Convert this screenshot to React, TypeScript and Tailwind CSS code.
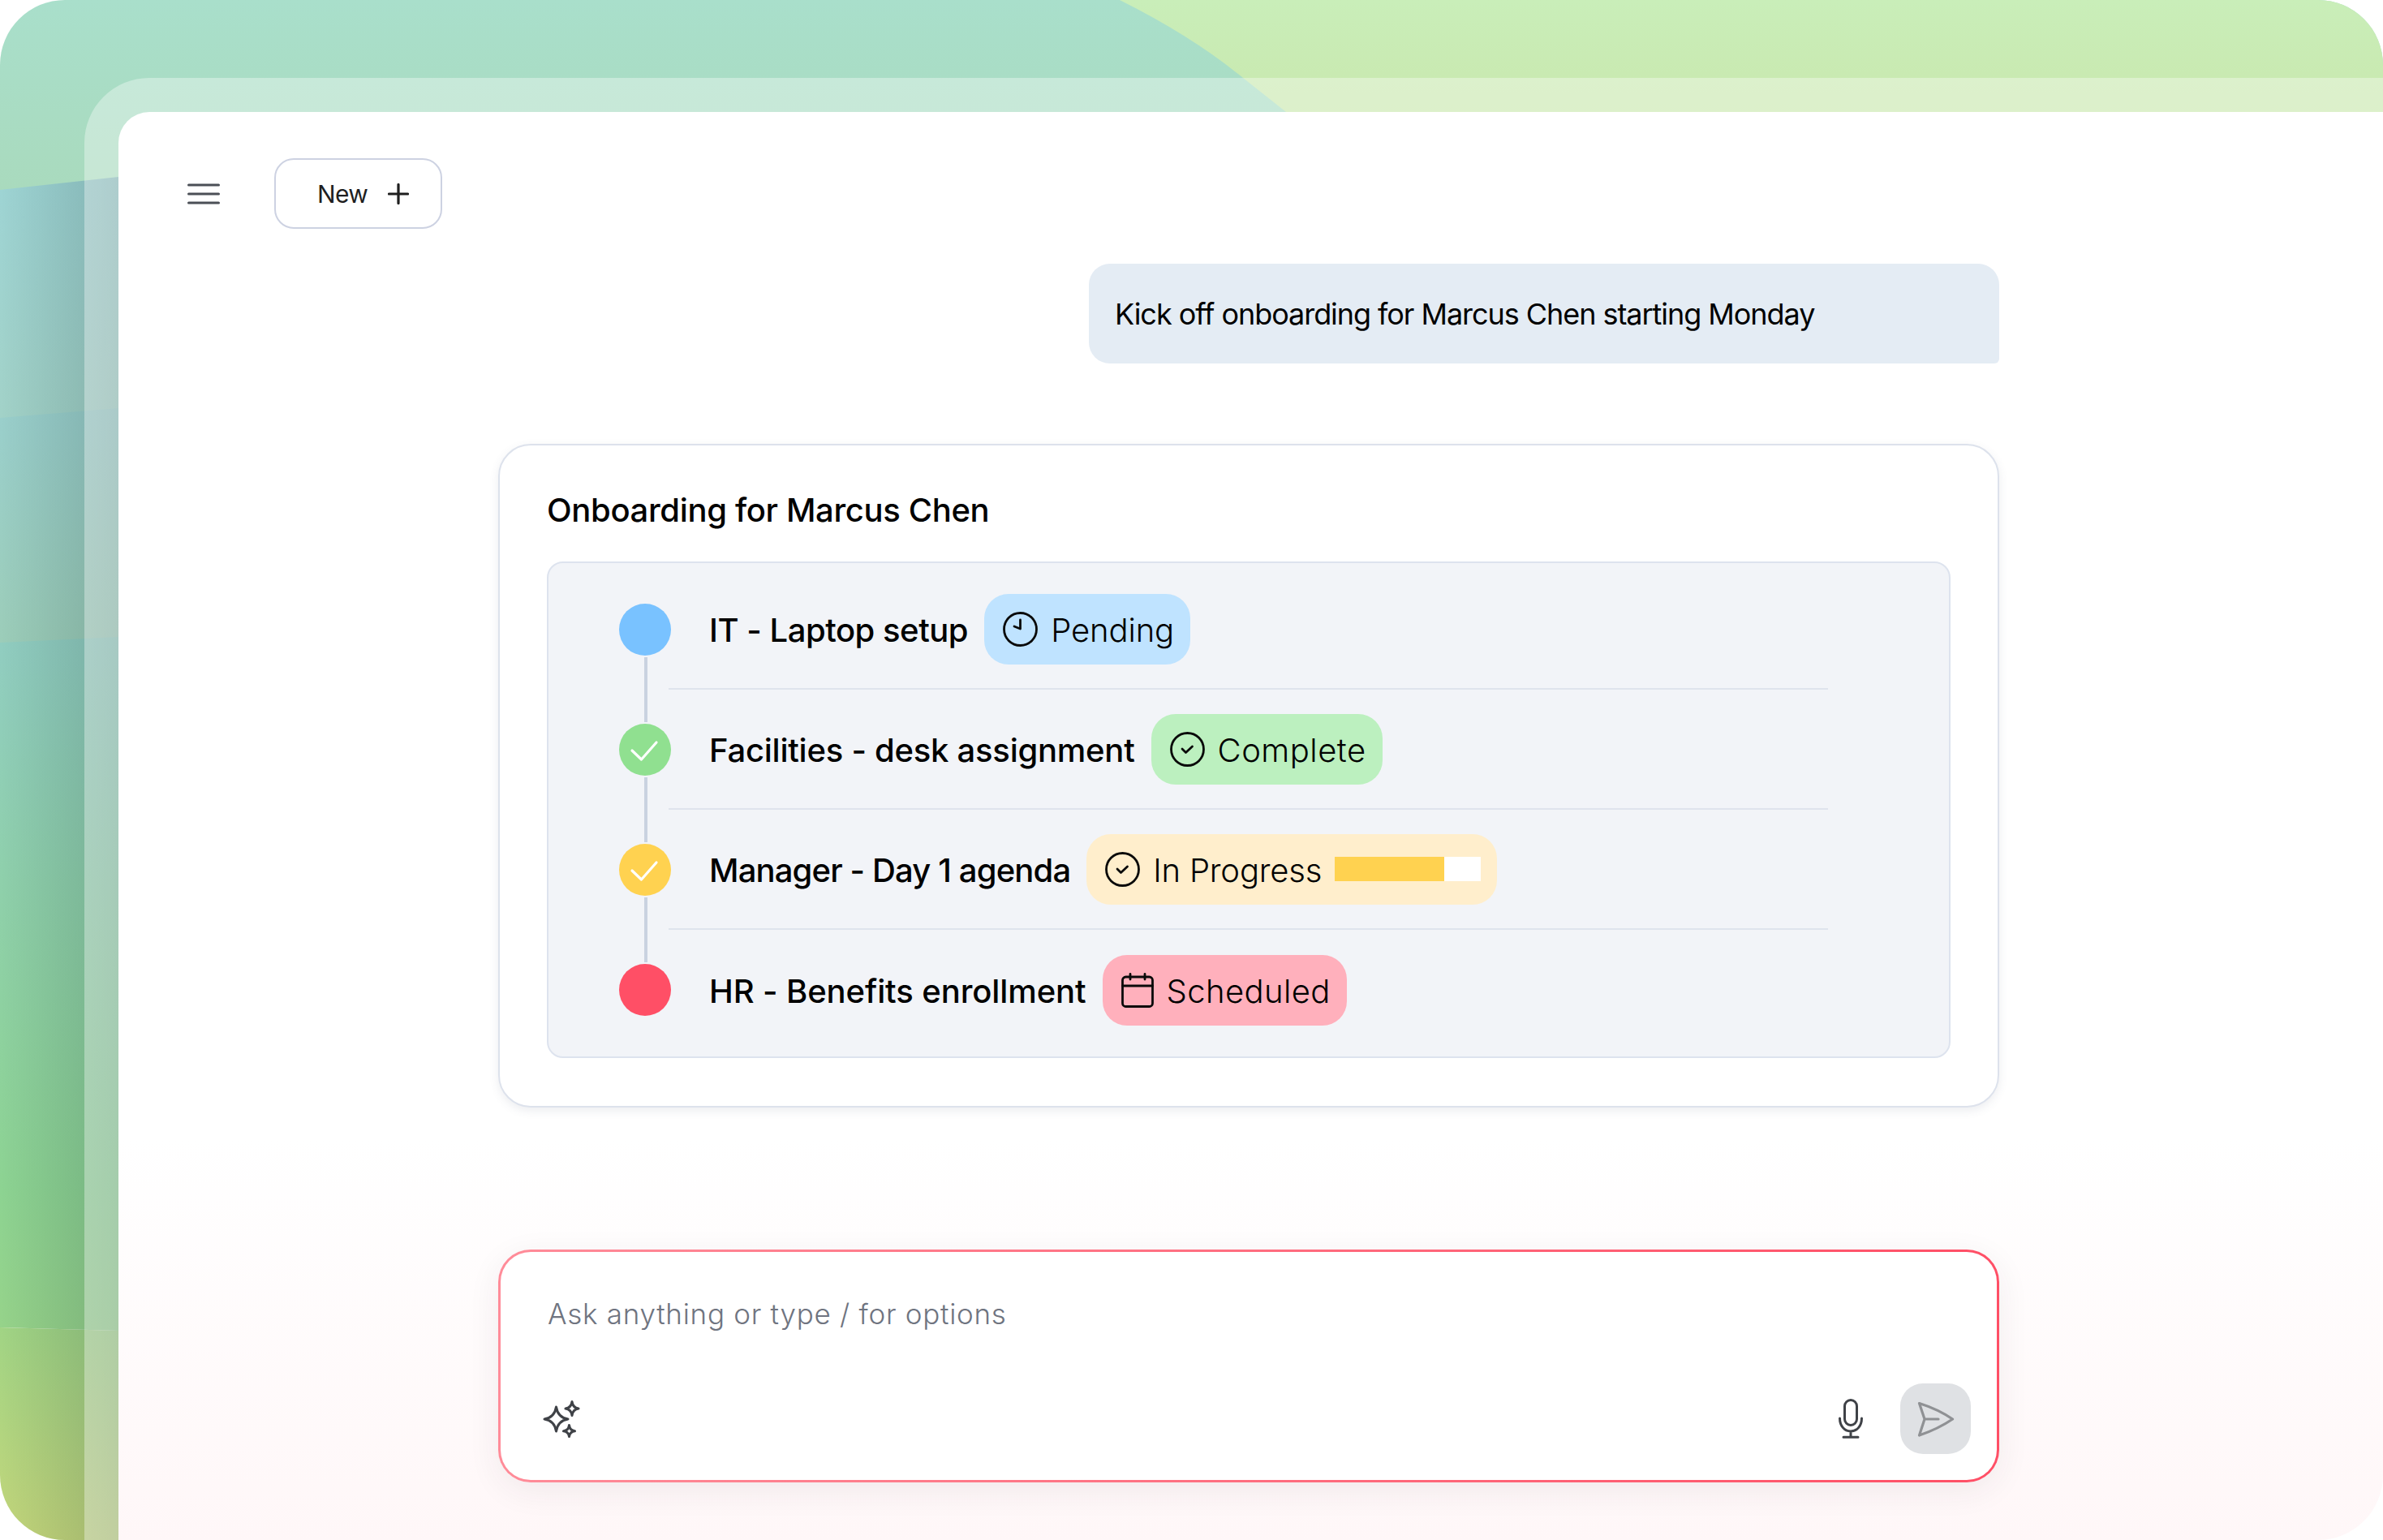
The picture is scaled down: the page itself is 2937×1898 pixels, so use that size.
import type { ReactNode } from 'react';

const font = { fontFamily: 'Inter, "Liberation Sans", sans-serif' };

// painted backdrop behind the app frame
const Backdrop = () => (
  <svg className="absolute inset-0" width="2937" height="1898" viewBox="0 0 2937 1898" fill="none">
    <defs>
      <linearGradient id="mint" x1="0" y1="0" x2="0" y2="240" gradientUnits="userSpaceOnUse">
        <stop stopColor="#a9dfcb" />
        <stop offset="1" stopColor="#a9dabd" />
      </linearGradient>
      <linearGradient id="lime" x1="0" y1="0" x2="0" y2="140" gradientUnits="userSpaceOnUse">
        <stop stopColor="#c9eeb9" />
        <stop offset="1" stopColor="#c9e8ae" />
      </linearGradient>
      <linearGradient id="b1" x1="0" y1="225" x2="0" y2="515" gradientUnits="userSpaceOnUse">
        <stop stopColor="#9ed4d4" />
        <stop offset="1" stopColor="#a2d2c8" />
      </linearGradient>
      <linearGradient id="b2" x1="0" y1="505" x2="0" y2="792" gradientUnits="userSpaceOnUse">
        <stop stopColor="#9acfcc" />
        <stop offset="1" stopColor="#9ccdb9" />
      </linearGradient>
      <linearGradient id="b3" x1="0" y1="785" x2="0" y2="1636" gradientUnits="userSpaceOnUse">
        <stop stopColor="#91cdc1" />
        <stop offset="0.36" stopColor="#8fd0ab" />
        <stop offset="0.8" stopColor="#8dd392" />
        <stop offset="1" stopColor="#96d38a" />
      </linearGradient>
      <linearGradient id="b4" x1="0" y1="1630" x2="0" y2="1898" gradientUnits="userSpaceOnUse">
        <stop stopColor="#a0d485" />
        <stop offset="1" stopColor="#c4d67a" />
      </linearGradient>
      <linearGradient id="shade" x1="0" y1="0" x2="146" y2="0" gradientUnits="userSpaceOnUse">
        <stop stopColor="#1e3c3c" stopOpacity="0" />
        <stop offset="1" stopColor="#1e3c3c" stopOpacity="0.22" />
      </linearGradient>
    </defs>
    <rect width="2937" height="240" fill="url(#mint)" />
    <path d="M1380 0Q1470 45 1532 96L1585 138V240H2937V0Z" fill="url(#lime)" />
    <path d="M0 234L146 218V520L0 516Z" fill="url(#b1)" />
    <path d="M0 515L146 503V792L0 792Z" fill="url(#b2)" />
    <path d="M0 792L146 785V1640L0 1636Z" fill="url(#b3)" />
    <path d="M0 1636L146 1640V1898H0Z" fill="url(#b4)" />
    <path d="M0 234L146 218V1898H0Z" fill="url(#shade)" />
  </svg>
);

const Clock = () => (
  <svg width="43" height="43" viewBox="0 0 43 43" fill="none" stroke="#0a0a0a" strokeWidth="2.8" strokeLinecap="round" strokeLinejoin="round">
    <circle cx="21.5" cy="21.5" r="20" />
    <path d="M21.5 10V21L14 18" />
  </svg>
);

const CircleCheck = () => (
  <svg width="43" height="43" viewBox="0 0 43 43" fill="none" stroke="#0a0a0a" strokeWidth="2.8" strokeLinecap="round" strokeLinejoin="round">
    <circle cx="21.5" cy="21.5" r="20" />
    <path d="M15 21L19.5 25.5L27.5 18" />
  </svg>
);

const CalendarIcon = () => (
  <svg width="40" height="43" viewBox="0 0 40 43" fill="none" stroke="#0a0a0a" strokeWidth="2.8" strokeLinecap="round" strokeLinejoin="round">
    <rect x="1.5" y="5" width="37" height="36.5" rx="4" />
    <path d="M1.5 16H38.5M11 1.5V8M29 1.5V8" />
  </svg>
);

const Sparkles = () => (
  <svg width="46" height="46" viewBox="0 0 46 46" fill="none" stroke="#3f4247" strokeWidth="3" strokeLinejoin="round">
    <path d="M16.5 8Q18.5 21 31 23Q18.5 25 16.5 38Q14.5 25 2 23Q14.5 21 16.5 8Z" />
    <path d="M36 1.5Q37 9 44 10Q37 11 36 18.5Q35 11 28 10Q35 9 36 1.5Z" />
    <path d="M32.5 30.5Q33.3 37 39.5 37.8Q33.3 38.6 32.5 44.5Q31.7 38.6 25.5 37.8Q31.7 37 32.5 30.5Z" />
  </svg>
);

const MicIcon = () => (
  <svg width="30" height="49" viewBox="0 0 30 49" fill="none" stroke="#3f4247" strokeWidth="3" strokeLinecap="round" strokeLinejoin="round">
    <rect x="7.5" y="1.5" width="15" height="31" rx="7.5" />
    <path d="M1.5 24C1.5 33 7 40 15 40S28.5 33 28.5 24M15 40V47M6 47.2H24" />
  </svg>
);

const SendIcon = () => (
  <svg width="46" height="44" viewBox="0 0 46 44" fill="none" stroke="#8f9194" strokeWidth="3.2" strokeLinecap="round" strokeLinejoin="round">
    <path d="M2.5 2.5Q26 10 43.5 22Q26 34 2.5 42L9 22ZM9 22H26" />
  </svg>
);

const Pill = ({ bg, icon, label, tracking, children }: { bg: string; icon: ReactNode; label: string; tracking: string; children?: ReactNode }) => (
  <div className={`flex h-[87px] items-center gap-[16px] rounded-[30px] pl-[23px] pr-[20px] ${bg}`}>
    {icon}
    <span className={`mt-[4px] text-[40px] leading-[48px] font-light text-black ${tracking}`}>{label}</span>
    {children}
  </div>
);

const Row = ({ dot, check, line, last, label, tracking, children }: { dot: string; check?: boolean; line?: boolean; last?: boolean; label: string; tracking: string; children: ReactNode }) => (
  <div className="flex h-[148px] pl-[87px] pr-[149px]">
    <div className="relative flex items-center">
      <div className={`flex size-[64px] items-center justify-center rounded-full ${dot}`}>
        {check && (
          <svg width="64" height="64" viewBox="0 0 64 64" fill="none" stroke="#fff" strokeWidth="3.2" strokeLinecap="round" strokeLinejoin="round">
            <path d="M16 33L27.5 44L46 23" />
          </svg>
        )}
      </div>
      {line && <div className="absolute left-[31px] top-[108px] h-[80px] w-[4px] bg-[#c9d2e0]" />}
    </div>
    <div className={`ml-[-3px] flex flex-1 items-center gap-[20px] pl-[50px] ${last ? '' : 'border-b-2 border-[#dfe4ed]'}`}>
      <span className={`mt-[4px] text-[40px] leading-[48px] font-medium text-black ${tracking}`}>{label}</span>
      {children}
    </div>
  </div>
);

export default function App() {
  return (
    <div style={font} className="relative h-[1898px] w-[2937px] overflow-hidden rounded-[80px] bg-white">
      <Backdrop />
      <div className="relative h-full pl-[104px] pt-[96px]">
        <div className="h-full rounded-tl-[80px] bg-white/35 pl-[42px] pt-[42px]">
          <main className="h-full rounded-tl-[38px] bg-[linear-gradient(180deg,#fff_72%,#fff7f8_100%)]">
            <header className="flex items-center gap-[67px] pl-[85px] pt-[57px]">
              <svg width="40" height="26" viewBox="0 0 40 26" fill="none" stroke="#4b4f56" strokeWidth="3" strokeLinecap="round">
                <path d="M1.5 2H38.5M1.5 13H38.5M1.5 24H38.5" />
              </svg>
              <button className="flex h-[87px] w-[207px] items-center gap-[25px] rounded-[24px] border-2 border-[#cdd2e2] pl-[51px] text-[#1f1f1f]">
                <span className="text-[30px] leading-none tracking-[-0.6px]">New</span>
                <svg width="26" height="26" viewBox="0 0 26 26" fill="none" stroke="#1f1f1f" strokeWidth="3.2" strokeLinecap="round">
                  <path d="M13 1.5V24.5M1.5 13H24.5" />
                </svg>
              </button>
            </header>

            <div className="ml-[468px] flex w-[1850px] flex-col">
              <div className="mt-[43px] flex justify-end">
                <div className="flex h-[123px] w-[1122px] items-center rounded-[26px] rounded-br-[6px] bg-[#e4ecf4] pl-[32px] text-[36px] text-black tracking-[-1.05px]">
                  Kick off onboarding for Marcus Chen starting Monday
                </div>
              </div>

              <section className="mt-[99px] rounded-[40px] border-2 border-[#dde2ec] bg-white px-[58px] pb-[59px] pt-[56px] shadow-[0_4px_12px_rgba(70,80,110,0.1)]">
                <h2 className="mb-[39px] text-[40px] leading-[48px] font-medium text-black tracking-[-0.35px]">Onboarding for Marcus Chen</h2>
                <div className="rounded-[20px] border-2 border-[#dde3ee] bg-[#f2f4f8] py-[8px]">
                  <Row dot="bg-[#79c2ff]" line label="IT - Laptop setup" tracking="tracking-[-0.47px]">
                    <Pill bg="bg-[#bfe3ff]" icon={<Clock />} label="Pending" tracking="tracking-[-0.1px]" />
                  </Row>
                  <Row dot="bg-[#90e090]" check line label="Facilities - desk assignment" tracking="tracking-[-0.25px]">
                    <Pill bg="bg-[#bcf0bf]" icon={<CircleCheck />} label="Complete" tracking="tracking-[0.5px]" />
                  </Row>
                  <Row dot="bg-[#ffd250]" check line label="Manager - Day 1 agenda" tracking="tracking-[-0.85px]">
                    <Pill bg="bg-[#ffeecc]" icon={<CircleCheck />} label="In Progress" tracking="tracking-[-0.2px]">
                      <div className="h-[30px] w-[180px] bg-white">
                        <div className="h-full w-3/4 bg-[#ffd250]" />
                      </div>
                    </Pill>
                  </Row>
                  <Row dot="bg-[#ff4f66]" last label="HR - Benefits enrollment" tracking="tracking-[-0.1px]">
                    <Pill bg="bg-[#ffb0bc]" icon={<CalendarIcon />} label="Scheduled" tracking="tracking-[0.4px]" />
                  </Row>
                </div>
              </section>

              <section className="mt-[175px] flex h-[287px] flex-col rounded-[40px] border-[3px] border-transparent pb-[32px] pl-[52px] pr-[32px] pt-[53px] shadow-[0_10px_40px_rgba(60,40,60,0.07)] [background:linear-gradient(#fff,#fff)_padding-box,linear-gradient(90deg,#ff8c99,#ff4f66)_border-box]">
                <div className="ml-[6px] text-[35px] leading-[46px] font-light text-[#6f7480] tracking-[0.72px]">Ask anything or type / for options</div>
                <div className="mt-auto flex items-center gap-[46px]">
                  <Sparkles />
                  <div className="flex-1" />
                  <MicIcon />
                  <button className="flex size-[87px] items-center justify-center rounded-[28px] bg-[#dfe1e4]">
                    <SendIcon />
                  </button>
                </div>
              </section>
            </div>
          </main>
        </div>
      </div>
    </div>
  );
}
